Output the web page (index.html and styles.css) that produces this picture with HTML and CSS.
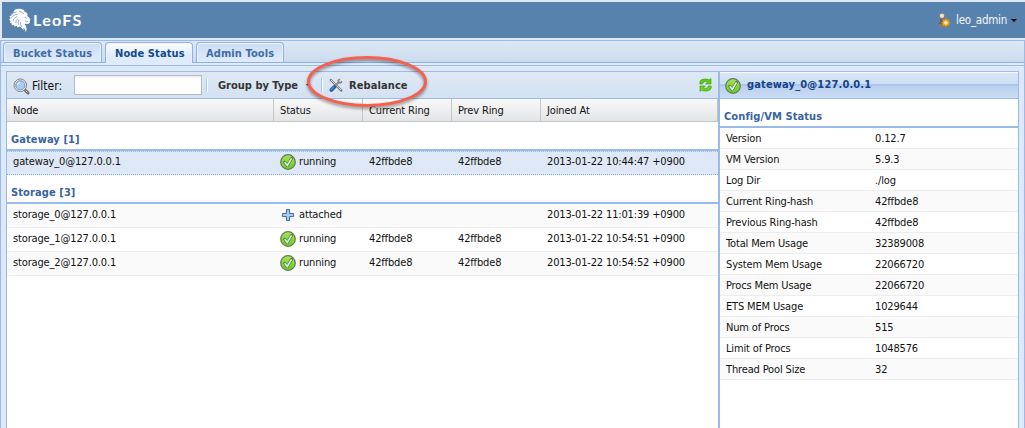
FILE: index.html
```html
<!DOCTYPE html>
<html lang="en">
<head>
<meta charset="utf-8">
<title>LeoFS</title>
<link rel="stylesheet" href="styles.css">
</head>
<body>
<svg class="defs" width="0" height="0">
  <defs>
    <linearGradient id="green" x1="0" y1="0" x2="0" y2="1"><stop offset="0" stop-color="#a6e35a"/><stop offset="1" stop-color="#63cf1c"/></linearGradient>
    <symbol id="check" viewBox="0 0 16 16">
      <circle cx="8" cy="8" r="7.300" fill="url(#green)" stroke="#66775a" stroke-width="1.200"/>
      <path d="M4.600 8.300l2.700 3.100 4.200-7" fill="none" stroke="#5b7a49" stroke-width="3" stroke-linejoin="round" stroke-linecap="round"/>
      <path d="M4.600 8.300l2.700 3.100 4.200-7" fill="none" stroke="#e6f2df" stroke-width="1.600"/>
    </symbol>
  </defs>
</svg>
<div class="app">
  <header class="banner">
    <div class="brand">
      <svg class="lion" width="24" height="25" viewBox="0 0 24 25">
        <path fill="#fff" d="M8 1.600c3-1.300 7-1 9.500.9l-.8.800c2 .5 3.400 1.700 4 3.200l-.6 1.400 2 1.300 1.200 2.600-.6 1.400.2 1.600-1.800 1.300-2-.4-1.600.2 1.400 2 .7 3-.7 3.400-1.200-3.400-1.400-1 .4 2.600-2.200-2.700-2.300-1.200-1.500 1-.9-1.700-2.600.7-.2-1.600-2.400.2.2-1.900-2-.6.800-1.700-1.700-1.500 1.500-1.200-.8-2.200 1.700-.3.200-2.300 1.700.1.500-2z"/>
        <path fill="none" stroke="#5882ae" stroke-width=".6" d="M4.500 7q2-3 5-3M4 10.500q2-4 7-4.500M6 13q0-3 4-4.500M9 15.500q-1-3 2-5M12 17q-2-3 0-5.500M15 19q-2-2-1.500-5M17.500 9.500l2.300.7M21 13.500l-3-.5M12 3.500q3 0 5 2.500"/>
      </svg>
      <span class="brand-name">LeoFS</span>
    </div>
    <div class="user">
      <svg width="16" height="16" viewBox="0 0 16 16">
        <path d="M3 14c-1-1.500 0-3 1.500-4L3.800 6.500h4.400L8 10c1 .8 2.500 2.500 2 4z" fill="#66625a"/>
        <path d="M2.500 12h6v2.500h-6z" fill="#85806f"/>
        <circle cx="6" cy="3.800" r="2.700" fill="#e9e3d8" stroke="#837b72"/>
        <path d="M10 6l1 2 2.200-.7-.5 2.200 2 1.200-2 1.200.4 2.200-2.200-.6-1.100 2-1.100-2-2.200.6.5-2.200-2-1.200 2-1.200-.5-2.200 2.200.7z" fill="#f6a623" stroke="#cb7617" stroke-width=".5"/>
        <circle cx="9.900" cy="10.700" r="1.800" fill="#fff3bf"/>
      </svg>
      <span class="user-name">leo_admin</span><i class="caret"></i>
    </div>
  </header>

  <main class="shell">
    <nav class="tabs">
      <a class="tab tab-bucket">Bucket Status</a>
      <a class="tab tab-node active">Node Status</a>
      <a class="tab tab-admin">Admin Tools</a>
    </nav>
    <div class="strip"></div>
    <div class="content">
      <section class="nodes">
        <div class="toolbar">
          <svg class="magnifier" width="17" height="17" viewBox="0 0 17 17">
            <path d="M11.500 11.500l3.500 3.500" stroke="#666" stroke-width="3" stroke-linecap="round"/>
            <path d="M12.500 12.500l2 2" stroke="#ddd" stroke-width="1"/>
            <circle cx="7.300" cy="7.300" r="6.300" fill="#eee" stroke="#777" stroke-width=".9"/>
            <circle cx="7.300" cy="7.300" r="4.600" fill="#a9ccf1" stroke="#6d8fb7" stroke-width=".9"/>
            <path d="M4.500 7c.2-1.500 1.200-2.400 2.800-2.500" stroke="#fff" fill="none"/>
          </svg>
          <label class="filter" for="filter">Filter:</label>
          <input id="filter" class="field" type="text">
          <i class="sep"></i>
          <span class="action group-by">Group by Type</span><i class="caret dark"></i>
          <i class="sep second"></i>
          <svg class="tools" width="14" height="14" viewBox="0 0 14 14">
            <path d="M1.800 2l7.500 7.500 3 3" stroke="#72756f" stroke-width="2.300" stroke-linecap="round" fill="none"/>
            <path d="M2 2l7.500 7.500 2.500 2.500" stroke="#dcdcd2" stroke-width="1" fill="none"/>
            <path d="M6.500 7.500l4-4" stroke="#8b8f8a" stroke-width="2.200"/>
            <path d="M10.800 1L9.300 2.500l.3 2 2 .3L13 3.300" stroke="#858983" stroke-width="1.700" fill="none"/>
            <path d="M5.300 9L2.400 11.900" stroke="#285d9f" stroke-width="3.800" stroke-linecap="round"/>
            <path d="M4.800 8.800l-3 3" stroke="#5b94d2" stroke-width="1.100"/>
          </svg>
          <span class="action rebalance">Rebalance</span>
          <svg class="refresh" width="13" height="14" viewBox="0 0 13 14">
            <path d="M.8 6V4.300Q1.400 1.300 4.700 1.100H8q1.200 0 2 .9L12 .600V6H6.600l1.700-1.800Q7.500 3.400 6.500 3.400 4 3.400 3.600 6z" fill="#62c91c" stroke="#41a512" stroke-width=".7"/>
            <path d="M12.200 8v1.700q-.6 3-3.900 3.200H5q-1.200 0-2-.9L1 13.400V8h5.400L4.700 9.800q.8.800 1.800.8 2.500 0 2.900-2.600z" fill="#6ed026" stroke="#41a512" stroke-width=".7"/>
          </svg>
        </div>
        <div class="row head"><span>Node</span><span>Status</span><span>Current Ring</span><span>Prev Ring</span><span>Joined At</span></div>
        <h2 class="group">Gateway [1]</h2>
        <div class="row selected"><span>gateway_0@127.0.0.1</span><span class="status"><svg width="16" height="16"><use href="#check"/></svg>running</span><span>42ffbde8</span><span>42ffbde8</span><span>2013-01-22 10:44:47 +0900</span></div>
        <h2 class="group">Storage [3]</h2>
        <div class="row alt"><span>storage_0@127.0.0.1</span><span class="status"><svg width="16" height="16" viewBox="0 0 16 16"><path d="M6.500 2.500h3v4h4v3h-4v4h-3v-4h-4v-3h4z" fill="#a9cdef" stroke="#3a69ad"/></svg>attached</span><span></span><span></span><span>2013-01-22 11:01:39 +0900</span></div>
        <div class="row"><span>storage_1@127.0.0.1</span><span class="status"><svg width="16" height="16"><use href="#check"/></svg>running</span><span>42ffbde8</span><span>42ffbde8</span><span>2013-01-22 10:54:51 +0900</span></div>
        <div class="row alt"><span>storage_2@127.0.0.1</span><span class="status"><svg width="16" height="16"><use href="#check"/></svg>running</span><span>42ffbde8</span><span>42ffbde8</span><span>2013-01-22 10:54:52 +0900</span></div>
      </section>
      <aside class="detail">
        <div class="title"><svg width="16" height="16"><use href="#check"/></svg><span>gateway_0@127.0.0.1</span></div>
        <h2 class="group">Config/VM Status</h2>
        <dl class="props">
          <div><dt>Version</dt><dd>0.12.7</dd></div>
          <div><dt>VM Version</dt><dd>5.9.3</dd></div>
          <div><dt>Log Dir</dt><dd>./log</dd></div>
          <div><dt>Current Ring-hash</dt><dd>42ffbde8</dd></div>
          <div><dt>Previous Ring-hash</dt><dd>42ffbde8</dd></div>
          <div><dt>Total Mem Usage</dt><dd>32389008</dd></div>
          <div><dt>System Mem Usage</dt><dd>22066720</dd></div>
          <div><dt>Procs Mem Usage</dt><dd>22066720</dd></div>
          <div><dt>ETS MEM Usage</dt><dd>1029644</dd></div>
          <div><dt>Num of Procs</dt><dd>515</dd></div>
          <div><dt>Limit of Procs</dt><dd>1048576</dd></div>
          <div><dt>Thread Pool Size</dt><dd>32</dd></div>
        </dl>
      </aside>
    </div>
  </main>
  <svg class="highlight" width="130" height="62" viewBox="0 0 130 62">
    <ellipse cx="65" cy="27.500" rx="58.500" ry="24" fill="none" stroke="#f4624f" stroke-width="3"/>
  </svg>
</div>
</body>
</html>
```
FILE: styles.css
```css
* { box-sizing: border-box; }
body {
  margin: 0;
  font-family: "DejaVu Sans Condensed", "DejaVu Sans", sans-serif;
  font-stretch: condensed;
  font-size: 11px;
  letter-spacing: -0.15px;
  color: #111;
  background: #dfe8f6;
}
svg { display: block; flex: none; }
.defs { position: absolute; }
.app { height: 428px; display: flex; flex-direction: column; overflow: hidden; position: relative; padding-top: 2px; }
.banner { height: 36px; flex: none; margin-left: 2px; background: #5882ae; display: flex; justify-content: space-between; align-items: center; padding: 0 8px 0 5px; }
.brand { display: flex; align-items: center; }
.brand-name { color: #fff; font: bold 16px/18px Lato, sans-serif; letter-spacing: 1.3px; margin-left: 2px; }
.user { display: flex; align-items: center; color: #f2f6fb; }
.user-name { margin-left: 4px; font-size: 11.5px; letter-spacing: -0.25px; }
.caret { margin-left: 4px; border: 3px solid transparent; border-top-color: #000; border-bottom: 0; width: 0; height: 0; flex: none; }
.caret.dark { margin-left: 8px; border-width: 2px 2px 0; }

.shell { flex: 1; margin-top: 2px; border: 1px solid #99bbe8; border-bottom: 0; display: flex; flex-direction: column; }
.tabs { height: 22px; flex: none; display: flex; gap: 3px; padding: 1px 2px 0; background: linear-gradient(#dde8f5, #cbdbef); border-bottom: 1px solid #8db2e3; }
.tab { height: 20px; border: 1px solid #8db2e3; border-bottom: 0; border-radius: 4px 4px 0 0; background: linear-gradient(#ccdcf2, #deecfd); box-shadow: inset 0 1px #f2f7fd, inset 1px 0 #eaf2fc, inset -1px 0 #eaf2fc; color: #416da3; font-weight: bold; line-height: 22px; padding-left: 9px; letter-spacing: 0.1px; white-space: nowrap; }
.tab-bucket { width: 99px; }
.tab-node { width: 88px; }
.tab-admin { width: 88px; }
.tab.active { height: 21px; color: #15498b; background: linear-gradient(#fff, #deecfd 60%); }
.strip { flex: none; border-bottom: 1px solid #99bbe8; height: 3px; background: #deecfd; }
.content { flex: 1; display: flex; padding: 5px 5px 0; }
.nodes { width: 714px; flex: none; background: #fff; border: 1px solid #99bbe8; border-width: 1px 2px 0 1px; }
.toolbar { height: 27px; display: flex; align-items: center; border-bottom: 1px solid #99bbe8; background: linear-gradient(#dfe9f5, #d3e1f1); padding: 0 6px 0 6px; }
.magnifier { margin-top: 2px; }
.filter { margin-left: 2px; width: 42px; font-size: 12px; letter-spacing: 0; padding-top: 2px; }
.field { width: 128px; height: 20px; border: 1px solid #b5b8c8; background: linear-gradient(#eee, #fff 3px); padding: 0 3px; border-radius: 0; margin: 0; }
.sep { width: 1px; height: 14px; margin-left: 4px; background: #98c8ff; box-shadow: 1px 0 #fff; flex: none; }
.sep.second { margin-left: 11px; }
.action { font-weight: bold; color: #333; letter-spacing: 0; white-space: nowrap; }
.group-by { margin-left: 11px; width: 80px; }
.tools { margin-left: 7px; }
.rebalance { margin-left: 6px; letter-spacing: 0.1px; }
.refresh { margin-left: auto; }
.row { height: 24px; display: grid; grid-template-columns: 267px 89px 89px 89px 177px; border-bottom: 1px solid #ededed; background: #fff; line-height: 22px; white-space: nowrap; }
.row > span { padding-left: 6px; }
.row.alt { background: #fafafa; }
.row.selected { background: #dfe8f6; border-top: 1px dotted #a3bae9; border-bottom: 1px dotted #7fa9e2; line-height: 20px; }
.row.head { height: 23px; background: linear-gradient(#f9f9f9, #e3e4e6); border-bottom: 1px solid #c5c5c5; line-height: 24px; }
.row.head span { height: 22px; border-right: 1px solid #c5c5c5; }
.status { display: flex; }
.status svg { margin: 3px 3px 0 0; }
.selected .status svg { margin-top: 2px; }
.group { height: 29px; margin: 0; padding: 9px 0 0 4px; border-bottom: 2px solid #99bbe8; color: #3764a0; font-size: 11px; line-height: 18px; letter-spacing: 0.1px; }
.detail { flex: 1; border: 1px solid #99bbe8; border-width: 1px 1px 0 0; background: #fff; }
.title { height: 27px; border-bottom: 1px solid #99bbe8; border-top: 1px solid #f3f8fd; background: linear-gradient(#dae7f6, #cddef3 45%, #abc7ec 46%, #abc7ec 50%, #b8cfee 51%, #cbddf3); color: #15428b; font-weight: bold; display: flex; align-items: center; padding-left: 5px; letter-spacing: 0.15px; }
.title span { margin: -2px 0 0 6px; }
.props { margin: 0; }
.props div { height: 21px; display: flex; border-bottom: 1px solid #ededed; line-height: 22px; padding-left: 6px; }
.props div:nth-child(even) { background: #fafafa; }
.props dt { width: 149px; }
.props dd { margin: 0; }
.highlight { position: absolute; left: 302px; top: 54px; filter: drop-shadow(0 2px 1.5px rgba(0, 0, 0, .4)); }
```
